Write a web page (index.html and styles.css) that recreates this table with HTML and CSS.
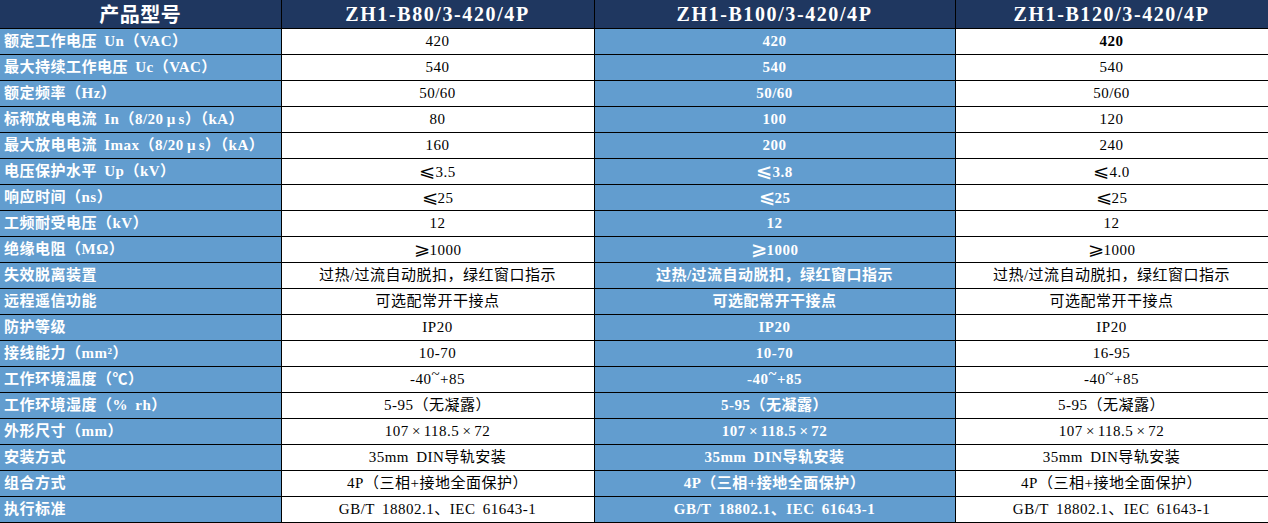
FILE: index.html
```html
<!DOCTYPE html>
<html lang="zh">
<head>
<meta charset="utf-8">
<title>产品参数</title>
<link rel="stylesheet" href="styles.css">
</head>
<body>
<table class="spec">
  <colgroup>
    <col class="c-label">
    <col class="c-a">
    <col class="c-b">
    <col class="c-c">
  </colgroup>
  <thead>
    <tr class="head">
      <th class="title">产品型号</th>
      <th class="model">ZH1-B80/3-420/4P</th>
      <th class="model">ZH1-B100/3-420/4P</th>
      <th class="model">ZH1-B120/3-420/4P</th>
    </tr>
  </thead>
  <tbody>
    <tr><td class="label">额定工作电压 Un（VAC）</td><td>420</td><td class="hl">420</td><td class="strong">420</td></tr>
    <tr><td class="label">最大持续工作电压 Uc（VAC）</td><td>540</td><td class="hl">540</td><td>540</td></tr>
    <tr><td class="label">额定频率（Hz）</td><td>50/60</td><td class="hl">50/60</td><td>50/60</td></tr>
    <tr><td class="label">标称放电电流 In（8/20<span class="wide">μ</span>s）（kA）</td><td>80</td><td class="hl">100</td><td>120</td></tr>
    <tr><td class="label">最大放电电流 Imax（8/20<span class="wide">μ</span>s）（kA）</td><td>160</td><td class="hl">200</td><td>240</td></tr>
    <tr><td class="label">电压保护水平 Up（kV）</td><td><span class="cmp">⩽</span>3.5</td><td class="hl"><span class="cmp">⩽</span>3.8</td><td><span class="cmp">⩽</span>4.0</td></tr>
    <tr><td class="label">响应时间（ns）</td><td><span class="cmp">⩽</span>25</td><td class="hl"><span class="cmp">⩽</span>25</td><td><span class="cmp">⩽</span>25</td></tr>
    <tr><td class="label">工频耐受电压（kV）</td><td>12</td><td class="hl">12</td><td>12</td></tr>
    <tr><td class="label">绝缘电阻（MΩ）</td><td><span class="cmp">⩾</span>1000</td><td class="hl"><span class="cmp">⩾</span>1000</td><td><span class="cmp">⩾</span>1000</td></tr>
    <tr><td class="label">失效脱离装置</td><td>过热/过流自动脱扣，绿红窗口指示</td><td class="hl">过热/过流自动脱扣，绿红窗口指示</td><td>过热/过流自动脱扣，绿红窗口指示</td></tr>
    <tr><td class="label">远程遥信功能</td><td>可选配常开干接点</td><td class="hl">可选配常开干接点</td><td>可选配常开干接点</td></tr>
    <tr><td class="label">防护等级</td><td>IP20</td><td class="hl">IP20</td><td>IP20</td></tr>
    <tr><td class="label">接线能力（mm²）</td><td>10-70</td><td class="hl">10-70</td><td>16-95</td></tr>
    <tr><td class="label">工作环境温度（℃）</td><td>-40<span class="tilde">~</span>+85</td><td class="hl">-40<span class="tilde">~</span>+85</td><td>-40<span class="tilde">~</span>+85</td></tr>
    <tr><td class="label">工作环境湿度（% rh）</td><td>5-95（无凝露）</td><td class="hl">5-95（无凝露）</td><td>5-95（无凝露）</td></tr>
    <tr><td class="label">外形尺寸（mm）</td><td>107<span class="wide">×</span>118.5<span class="wide">×</span>72</td><td class="hl">107<span class="wide">×</span>118.5<span class="wide">×</span>72</td><td>107<span class="wide">×</span>118.5<span class="wide">×</span>72</td></tr>
    <tr><td class="label">安装方式</td><td>35mm DIN导轨安装</td><td class="hl">35mm DIN导轨安装</td><td>35mm DIN导轨安装</td></tr>
    <tr><td class="label">组合方式</td><td>4P（三相+接地全面保护）</td><td class="hl">4P（三相+接地全面保护）</td><td>4P（三相+接地全面保护）</td></tr>
    <tr><td class="label">执行标准</td><td>GB/T 18802.1、IEC 61643-1</td><td class="hl">GB/T 18802.1、IEC 61643-1</td><td>GB/T 18802.1、IEC 61643-1</td></tr>
  </tbody>
</table>
</body>
</html>
```

FILE: styles.css
```css
html, body {
  margin: 0;
  padding: 0;
  background: #ffffff;
}

.spec {
  width: 1268px;
  table-layout: fixed;
  border-collapse: collapse;
  font-family: "Liberation Serif", "Noto Sans CJK SC", serif;
  font-size: 15px;
  color: #000;
}

.c-label { width: 281px; }
.c-a { width: 313px; }
.c-b { width: 361px; }
.c-c { width: 313px; }

.spec th,
.spec td {
  border: 1px solid #000;
  padding: 0;
  text-align: center;
  vertical-align: middle;
  white-space: nowrap;
  overflow: hidden;
  line-height: 18px;
}

.spec tr:first-child th { border-top: none; }
.spec th:first-child,
.spec td:first-child { border-left: none; }

.head { height: 28px; }
.head th {
  background: #1f3760;
  color: #ffffff;
  font-weight: bold;
  font-size: 20px;
}
.head th.title {
  font-family: "Noto Sans CJK SC", serif;
  font-size: 20px;
  letter-spacing: 0.5px;
}
.head th.model {
  letter-spacing: 1.6px;
}

.spec tbody tr { height: 26px; }

.spec td {
  letter-spacing: 0.5px;
  word-spacing: 3px;
}

.spec td.label {
  background: #629dcf;
  color: #ffffff;
  font-weight: bold;
  text-align: left;
  padding-left: 4px;
}

.spec td.hl {
  background: #629dcf;
  color: #ffffff;
  font-weight: bold;
}

.spec td.strong { font-weight: bold; }

.wide {
  display: inline-block;
  width: 15px;
  text-align: center;
  letter-spacing: 0;
}

.cmp {
  display: inline-block;
  width: 16px;
  font-size: 17px;
  font-family: "DejaVu Sans", sans-serif;
  text-align: center;
  letter-spacing: 0;
  transform: scaleX(1.15);
}

.tilde {
  display: inline-block;
  vertical-align: 5px;
  line-height: 8px;
}
```
